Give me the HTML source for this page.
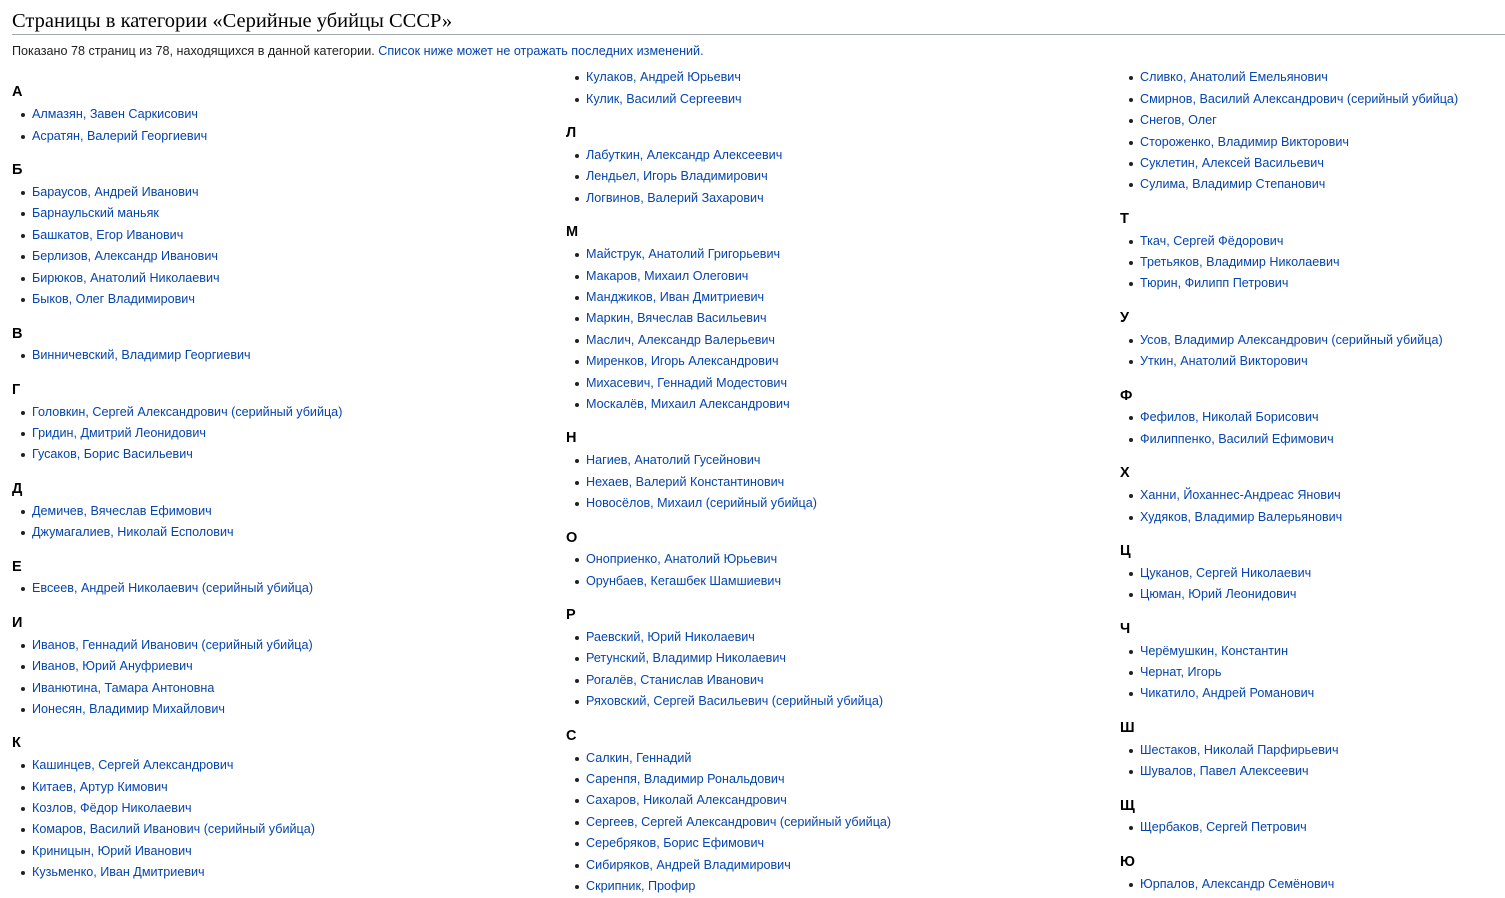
<!DOCTYPE html>
<html><head><meta charset="utf-8">
<style>
body{margin:0;width:1505px;height:898px;overflow:hidden;background:#fff;font-family:"Liberation Sans",Arial,sans-serif;color:#202122}
h1{position:absolute;left:12px;top:9px;margin:0;font:20.5px/24px "Liberation Serif",serif;color:#000;font-weight:normal}
.rule{position:absolute;left:12px;right:0;top:34px;border-top:1px solid #a2a9b1}
.info{position:absolute;left:12px;top:43px;font-size:12.6px;line-height:16px}
a{color:#0645ad;text-decoration:none}
.col{position:absolute;top:67.3px;width:554px}
.col h3{margin:13.1px 0 1.8px;font-size:14.5px;line-height:20px;font-weight:bold;color:#000}
.col h3.f{margin-top:15.2px}
ul{margin:0;padding:0;list-style:none}
li{position:relative;padding-left:20px;font-size:12.6px;line-height:21.4px;white-space:nowrap}
li:before{content:"";position:absolute;left:9px;top:9px;width:4px;height:4px;border-radius:50%;background:#202122}
</style></head><body>
<h1>Страницы в категории «Серийные убийцы СССР»</h1>
<div class="rule"></div>
<div class="info">Показано 78 страниц из 78, находящихся в данной категории. <a>Список ниже может не отражать последних изменений.</a></div>

<div class="col" style="left:12px">
<h3 class="f">А</h3><ul><li><a>Алмазян, Завен Саркисович</a></li><li><a>Асратян, Валерий Георгиевич</a></li></ul>
<h3>Б</h3><ul><li><a>Бараусов, Андрей Иванович</a></li><li><a>Барнаульский маньяк</a></li><li><a>Башкатов, Егор Иванович</a></li><li><a>Берлизов, Александр Иванович</a></li><li><a>Бирюков, Анатолий Николаевич</a></li><li><a>Быков, Олег Владимирович</a></li></ul>
<h3>В</h3><ul><li><a>Винничевский, Владимир Георгиевич</a></li></ul>
<h3>Г</h3><ul><li><a>Головкин, Сергей Александрович (серийный убийца)</a></li><li><a>Гридин, Дмитрий Леонидович</a></li><li><a>Гусаков, Борис Васильевич</a></li></ul>
<h3>Д</h3><ul><li><a>Демичев, Вячеслав Ефимович</a></li><li><a>Джумагалиев, Николай Есполович</a></li></ul>
<h3>Е</h3><ul><li><a>Евсеев, Андрей Николаевич (серийный убийца)</a></li></ul>
<h3>И</h3><ul><li><a>Иванов, Геннадий Иванович (серийный убийца)</a></li><li><a>Иванов, Юрий Ануфриевич</a></li><li><a>Иванютина, Тамара Антоновна</a></li><li><a>Ионесян, Владимир Михайлович</a></li></ul>
<h3>К</h3><ul><li><a>Кашинцев, Сергей Александрович</a></li><li><a>Китаев, Артур Кимович</a></li><li><a>Козлов, Фёдор Николаевич</a></li><li><a>Комаров, Василий Иванович (серийный убийца)</a></li><li><a>Криницын, Юрий Иванович</a></li><li><a>Кузьменко, Иван Дмитриевич</a></li></ul>
</div>

<div class="col" style="left:566px">
<ul><li><a>Кулаков, Андрей Юрьевич</a></li><li><a>Кулик, Василий Сергеевич</a></li></ul>
<h3>Л</h3><ul><li><a>Лабуткин, Александр Алексеевич</a></li><li><a>Лендьел, Игорь Владимирович</a></li><li><a>Логвинов, Валерий Захарович</a></li></ul>
<h3>М</h3><ul><li><a>Майструк, Анатолий Григорьевич</a></li><li><a>Макаров, Михаил Олегович</a></li><li><a>Манджиков, Иван Дмитриевич</a></li><li><a>Маркин, Вячеслав Васильевич</a></li><li><a>Маслич, Александр Валерьевич</a></li><li><a>Миренков, Игорь Александрович</a></li><li><a>Михасевич, Геннадий Модестович</a></li><li><a>Москалёв, Михаил Александрович</a></li></ul>
<h3>Н</h3><ul><li><a>Нагиев, Анатолий Гусейнович</a></li><li><a>Нехаев, Валерий Константинович</a></li><li><a>Новосёлов, Михаил (серийный убийца)</a></li></ul>
<h3>О</h3><ul><li><a>Оноприенко, Анатолий Юрьевич</a></li><li><a>Орунбаев, Кегашбек Шамшиевич</a></li></ul>
<h3>Р</h3><ul><li><a>Раевский, Юрий Николаевич</a></li><li><a>Ретунский, Владимир Николаевич</a></li><li><a>Рогалёв, Станислав Иванович</a></li><li><a>Ряховский, Сергей Васильевич (серийный убийца)</a></li></ul>
<h3>С</h3><ul><li><a>Салкин, Геннадий</a></li><li><a>Саренпя, Владимир Рональдович</a></li><li><a>Сахаров, Николай Александрович</a></li><li><a>Сергеев, Сергей Александрович (серийный убийца)</a></li><li><a>Серебряков, Борис Ефимович</a></li><li><a>Сибиряков, Андрей Владимирович</a></li><li><a>Скрипник, Профир</a></li></ul>
</div>

<div class="col" style="left:1120px">
<ul><li><a>Сливко, Анатолий Емельянович</a></li><li><a>Смирнов, Василий Александрович (серийный убийца)</a></li><li><a>Снегов, Олег</a></li><li><a>Стороженко, Владимир Викторович</a></li><li><a>Суклетин, Алексей Васильевич</a></li><li><a>Сулима, Владимир Степанович</a></li></ul>
<h3>Т</h3><ul><li><a>Ткач, Сергей Фёдорович</a></li><li><a>Третьяков, Владимир Николаевич</a></li><li><a>Тюрин, Филипп Петрович</a></li></ul>
<h3>У</h3><ul><li><a>Усов, Владимир Александрович (серийный убийца)</a></li><li><a>Уткин, Анатолий Викторович</a></li></ul>
<h3>Ф</h3><ul><li><a>Фефилов, Николай Борисович</a></li><li><a>Филиппенко, Василий Ефимович</a></li></ul>
<h3>Х</h3><ul><li><a>Ханни, Йоханнес-Андреас Янович</a></li><li><a>Худяков, Владимир Валерьянович</a></li></ul>
<h3>Ц</h3><ul><li><a>Цуканов, Сергей Николаевич</a></li><li><a>Цюман, Юрий Леонидович</a></li></ul>
<h3>Ч</h3><ul><li><a>Черёмушкин, Константин</a></li><li><a>Чернат, Игорь</a></li><li><a>Чикатило, Андрей Романович</a></li></ul>
<h3>Ш</h3><ul><li><a>Шестаков, Николай Парфирьевич</a></li><li><a>Шувалов, Павел Алексеевич</a></li></ul>
<h3>Щ</h3><ul><li><a>Щербаков, Сергей Петрович</a></li></ul>
<h3>Ю</h3><ul><li><a>Юрпалов, Александр Семёнович</a></li></ul>
</div>
</body></html>
